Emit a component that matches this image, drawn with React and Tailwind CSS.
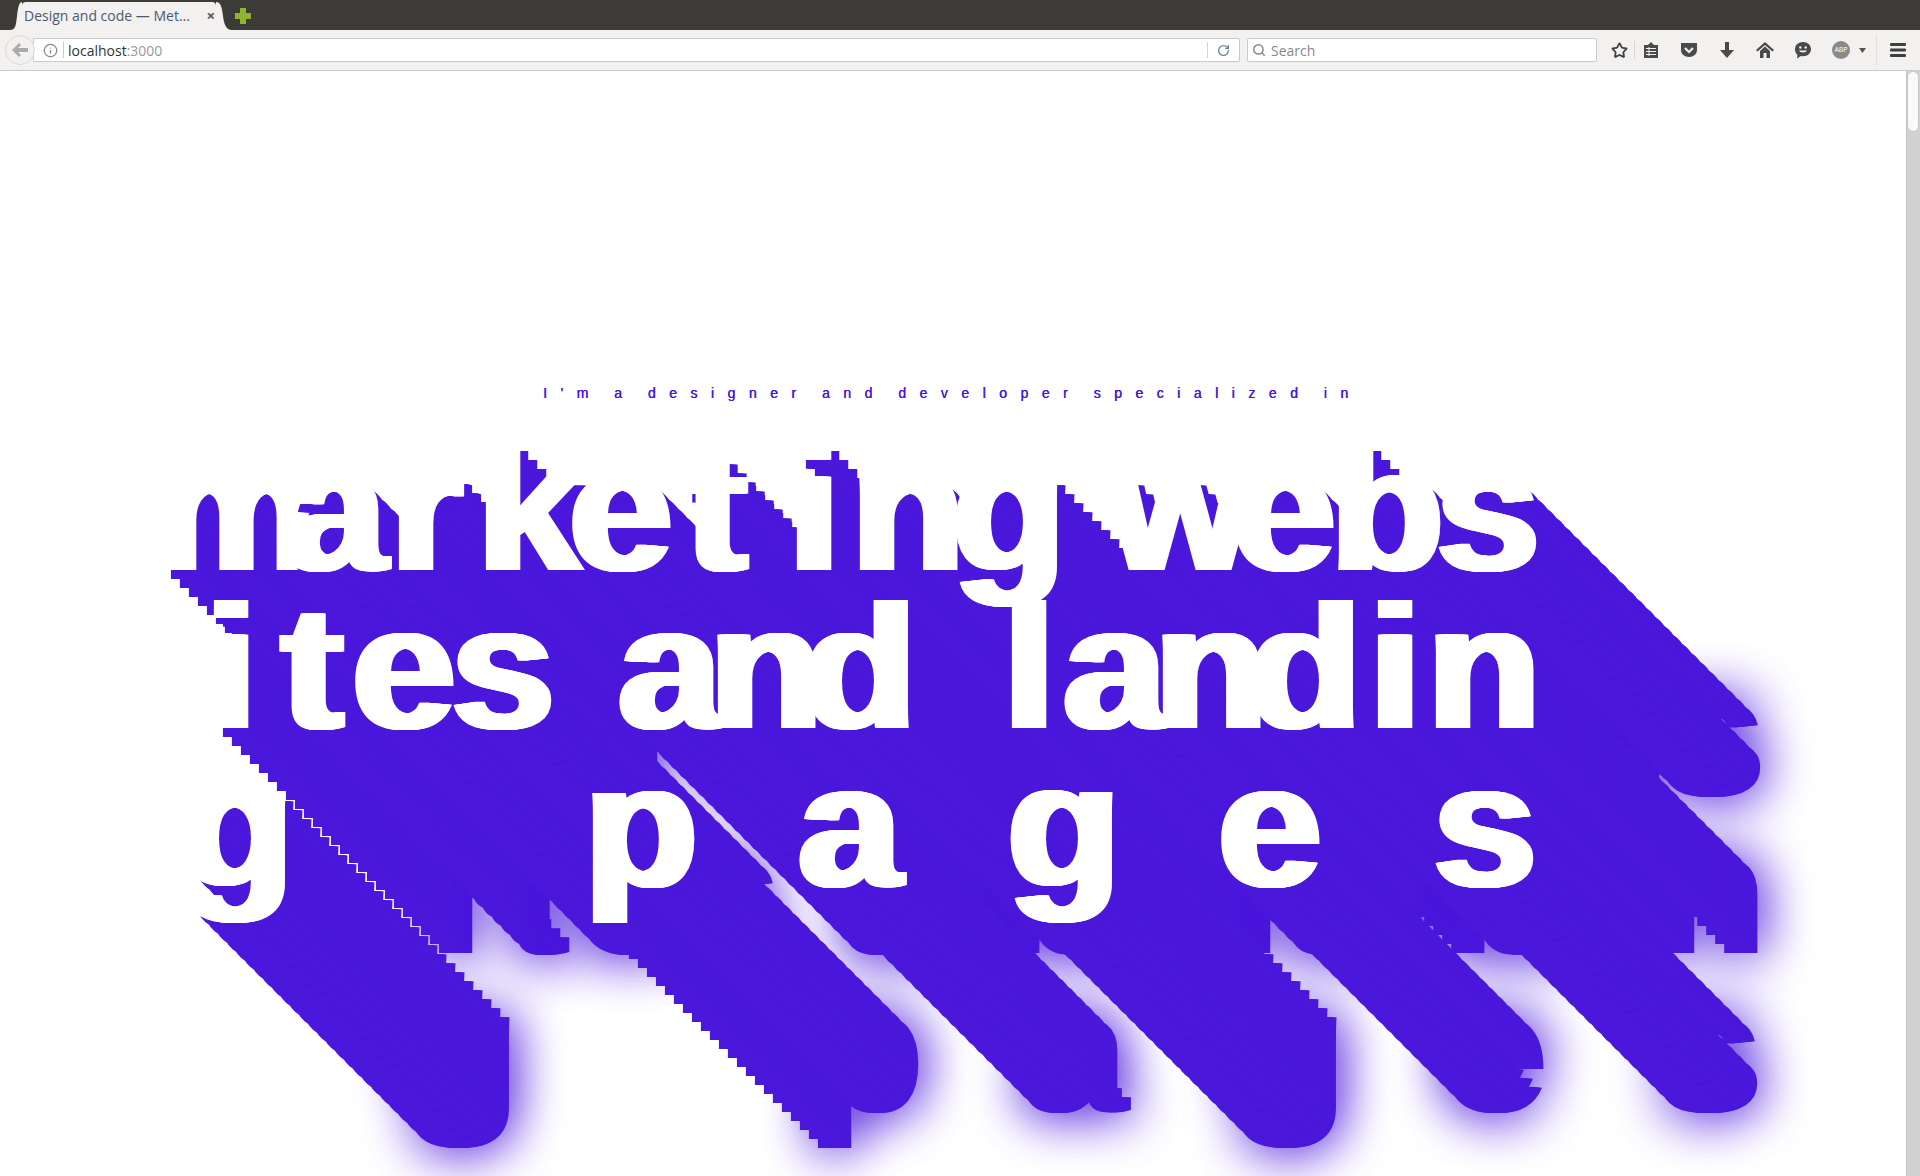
import React from 'react';
import { Info, RotateCw, Search, Star } from 'lucide-react';

const PURPLE = '#4a17db';
const SMEAR = 9;
const STRETCH = 1.05; // same as scale-x-[1.05] on the letters

// the heavy letters are a bold face smeared sideways, then a long stepped shadow every 9px
const px = (x) => `${(x / STRETCH).toFixed(2)}px`;

const buildShadow = () => {
    const parts = [];
    for (let x = 1; x <= SMEAR; x++) parts.push(`${px(x)} 0 0 #fff`);
    for (let i = 1; i <= 25; i++) {
        for (let x = 0; x <= SMEAR; x += 2) parts.push(`${px(i * 9 + x)} ${i * 9}px 0 ${PURPLE}`);
    }
    parts.push(`${px(225)} 225px 50px ${PURPLE}`);
    parts.push(`${px(225 + SMEAR)} 225px 50px ${PURPLE}`);
    return parts.join(',');
};

const heroShadow = buildShadow();

const rows = [
    [
        ['m', 'w-[130px]'], ['a', 'w-[107px]'], ['r', 'w-[87px]'], ['k', 'w-[92px]'], ['e', 'w-[116px]'],
        ['t', 'w-[103px]'], ['i', 'w-[63px]'], ['n', 'w-[101px]'], ['g', 'w-[156px]'], ['w', 'w-[124px]'],
        ['e', 'w-[98px]'], ['b', 'w-[106px]'], ['s', 'w-[110px]'],
    ],
    [
        ['i', 'w-[76px]'], ['t', 'w-[71px]'], ['e', 'w-[99px]'], ['s', 'w-[167px]'], ['a', 'w-[91px]'],
        ['n', 'w-[94px]'], ['d', 'w-[200px]'], ['l', 'w-[60px]'], ['a', 'w-[91px]'], ['n', 'w-[94px]'],
        ['d', 'w-[121px]'], ['i', 'w-[58px]'], ['n', 'w-[110px]'],
    ],
    [
        ['g', 'w-[404px]'], ['p', 'w-[214px]'], ['a', 'w-[209px]'], ['g', 'w-[211px]'], ['e', 'w-[215px]'], ['s', 'w-[110px]'],
    ],
];

const leftPad = ['pl-[149px]', 'pl-[201px]', 'pl-[176px]'];

function Hero() {
    return (
        <div className="font-['Liberation_Sans',sans-serif] font-bold text-white text-[176px] leading-[158px]">
            {rows.map((row, r) => (
                <div key={r} className={`flex h-[158px] ${leftPad[r]}`}>
                    {row.map(([ch, w], i) => (
                        <span key={i} className={`block flex-none origin-left scale-x-[1.05] ${w}`} style={{ textShadow: heroShadow }}>{ch}</span>
                    ))}
                </div>
            ))}
        </div>
    );
}

function ToolIcon({ children, className = '' }) {
    return (
        <svg className={`flex-none ${className}`} width="18" height="18" viewBox="0 0 18 18" fill="#4a4a4a">
            {children}
        </svg>
    );
}

export default function App() {
    return (
        <div className="flex flex-col w-full h-[1176px] overflow-hidden bg-white font-['Open_Sans',sans-serif]">
            {/* tab strip */}
            <div className="flex items-end h-[30px] bg-[#3c3b37] pl-[10px]">
                <svg className="flex-none" width="12" height="28" viewBox="0 0 12 28" fill="#f2f1f0">
                    <path d="M0 28c6 0 6-6 7-14C8 6 9 0 12 0v28z" />
                </svg>
                <div className="flex items-center justify-between w-[194px] h-[28px] pb-[2px] bg-[#f2f1f0] rounded-t-[4px] pl-[2px] pr-[1px]">
                    <span className="text-[14px] text-[#4c5a6e] whitespace-nowrap">Design and code — Met…</span>
                    <span className="text-[15px] font-bold leading-none text-[#555]">×</span>
                </div>
                <svg className="flex-none" width="16" height="28" viewBox="0 0 16 28" fill="#f2f1f0">
                    <path d="M16 28c-6 0-8-6-9-14C6 6 5 0 0 0v28z" />
                </svg>
                <svg className="flex-none ml-[3px] mb-[6px]" width="16" height="16" viewBox="0 0 16 16">
                    <path d="M5 0h6v5h5v6h-5v5H5v-5H0V5h5z" fill="#8fb52e" />
                </svg>
            </div>
            {/* nav bar */}
            <div className="flex items-center h-[41px] bg-[#f2f1f0] border-b border-[#cdc9c5] pl-[5px]">
                <div className="flex items-center justify-center w-[30px] h-[30px] rounded-full border border-[#dcdad8] bg-[#f2f1f0] z-10">
                    <svg width="16" height="14" viewBox="0 0 16 14" fill="#aaa"><path d="M7 0l2 2-3 3h10v4H6l3 3-2 2-7-7z" /></svg>
                </div>
                <div className="flex items-center w-[1207px] h-[24px] -ml-[2px] bg-white border border-[#cdc9c5] rounded-r-[2px]">
                    <Info size={15} className="ml-[9px] text-[#888]" />
                    <div className="w-px h-[16px] bg-[#cdc9c5] ml-[5px] mr-[4px]" />
                    <span className="text-[14px] text-[#333]">localhost<span className="text-[#999]">:3000</span></span>
                    <div className="ml-auto w-px h-[16px] bg-[#d8d5d2]" />
                    <RotateCw size={13} strokeWidth={2.5} className="text-[#75869a] mx-[9px]" />
                </div>
                <div className="flex items-center w-[350px] h-[24px] ml-[7px] bg-white border border-[#cdc9c5] rounded-[2px]">
                    <Search size={14} strokeWidth={2.5} className="ml-[4px] text-[#888]" />
                    <span className="ml-[5px] text-[14px] text-[#888]">Search</span>
                </div>
                <Star size={17} strokeWidth={2.5} className="ml-[14px] flex-none text-[#3f3f3f]" />
                <div className="w-px h-[18px] bg-[#d8d5d2] ml-[6px] mr-[7px]" />
                <ToolIcon>
                    <path d="M2 4h4l3-3 3 3h4v13H2z" />
                    <path d="M4 7.500h10M4 10.500h10M4 13.500h10M7 6v9" stroke="#f2f1f0" strokeWidth="1" />
                </ToolIcon>
                <ToolIcon className="ml-[20px]">
                    <path d="M1 2h16v7c0 4-3.500 7-8 7s-8-3-8-7z" />
                    <path d="M5 7l4 4 4-4" fill="none" stroke="#f2f1f0" strokeWidth="2.200" />
                </ToolIcon>
                <ToolIcon className="ml-[20px]">
                    <path d="M7 1h4v8h5l-7 8-7-8h5z" />
                </ToolIcon>
                <ToolIcon className="ml-[20px]">
                    <path d="M9 1l9 8-1.500 1.500L9 4 1.500 10.500 0 9z" />
                    <path d="M9 5.500l5 4.500v7h-3.500v-5h-3v5H4v-7z" />
                </ToolIcon>
                <ToolIcon className="ml-[20px]">
                    <path d="M9 1c4.500 0 8 3 8 7.200s-3.500 7-8 7c-.7 0-1.500-.1-2.200-.3L3 17.500l.5-3.700C2 12.500 1 10.500 1 8.200 1 4 4.500 1 9 1z" />
                    <circle cx="6.300" cy="6.500" r="1.200" fill="#f2f1f0" />
                    <circle cx="11.700" cy="6.500" r="1.200" fill="#f2f1f0" />
                    <path d="M5 9.500c1 2.500 7 2.500 8 0z" fill="#f2f1f0" />
                </ToolIcon>
                <div className="flex items-center justify-center flex-none w-[18px] h-[18px] ml-[20px] rounded-full bg-[#8a8a8a] text-[7px] text-white">ABP</div>
                <svg className="flex-none ml-[9px]" width="7" height="5" viewBox="0 0 7 5" fill="#555"><path d="M0 0h7L3.500 5z" /></svg>
                <div className="flex-none w-px h-[30px] bg-[#e2e0de] ml-[10px]" />
                <svg className="flex-none ml-[13px]" width="16" height="14" viewBox="0 0 16 14" fill="#3f3f3f">
                    <rect width="16" height="3" rx="1" />
                    <rect y="5.500" width="16" height="3" rx="1" />
                    <rect y="11" width="16" height="3" rx="1" />
                </svg>
            </div>
            {/* page */}
            <div className="flex flex-1 min-h-0">
                <div className="flex-1 min-w-0">
                    <p className="pt-[314px] h-[359px] pl-[543px] text-[14px] leading-[16px] text-[#4a17db] [text-shadow:0.4px_0_0_#4a17db] tracking-[13.5px] [word-spacing:-5px] whitespace-nowrap font-['Liberation_Sans',sans-serif]">I'm a designer and developer specialized in</p>
                    <Hero />
                </div>
                <div className="flex-none w-[14px] bg-[#d2d2d2] border-l border-[#c4c4c4] z-10">
                    <div className="w-[12px] h-[61px] bg-[#f9f9f9] border border-[#c8c8c8] rounded-full" />
                </div>
            </div>
        </div>
    );
}
